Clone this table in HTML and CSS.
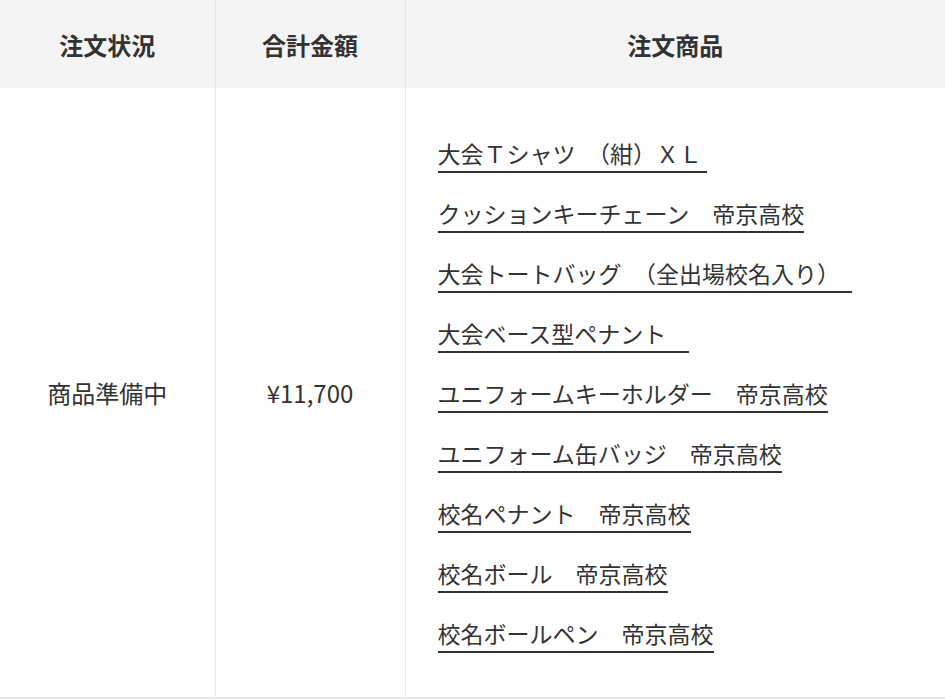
FILE: index.html
```html
<!DOCTYPE html>
<html lang="ja">
<head>
<meta charset="utf-8">
<link rel="stylesheet" href="styles.css">
</head>
<body>
<table class="orders">
  <colgroup>
    <col class="col-status">
    <col class="col-total">
    <col class="col-items">
  </colgroup>
  <thead>
    <tr>
      <th>注文状況</th>
      <th>合計金額</th>
      <th>注文商品</th>
    </tr>
  </thead>
  <tbody>
    <tr>
      <td class="center">商品準備中</td>
      <td class="center">¥11,700</td>
      <td class="items">
        <ul class="item-list">
          <li><a class="item">大会Ｔシャツ　（紺）ＸＬ&nbsp;</a></li>
          <li><a class="item">クッションキーチェーン　帝京高校</a></li>
          <li><a class="item">大会トートバッグ　（全出場校名入り）　</a></li>
          <li><a class="item">大会ベース型ペナント　</a></li>
          <li><a class="item">ユニフォームキーホルダー　帝京高校</a></li>
          <li><a class="item">ユニフォーム缶バッジ　帝京高校</a></li>
          <li><a class="item">校名ペナント　帝京高校</a></li>
          <li><a class="item">校名ボール　帝京高校</a></li>
          <li><a class="item">校名ボールペン　帝京高校</a></li>
        </ul>
      </td>
    </tr>
  </tbody>
</table>
</body>
</html>
```
FILE: styles.css
```css
html, body {
  margin: 0;
  padding: 0;
  background: #fff;
}
body {
  font-family: "Noto Sans CJK JP", "Noto Sans", sans-serif;
  color: #333;
}
.orders {
  width: 945px;
  border-collapse: collapse;
  table-layout: fixed;
}
.col-status { width: 215px; }
.col-total { width: 190px; }
.col-items { width: 540px; }
.orders th {
  height: 88px;
  padding: 0;
  background: #f4f4f4;
  font-size: 24px;
  font-weight: 700;
  text-align: center;
  vertical-align: middle;
  border-left: 1px solid #e8e8e8;
}
.orders th:first-child,
.orders td:first-child {
  border-left: none;
}
.orders td {
  padding: 0;
  font-size: 24px;
  border-left: 1px solid #e8e8e8;
  border-bottom: 2px solid #e8e8e8;
}
.center {
  text-align: center;
  vertical-align: middle;
}
.items {
  vertical-align: top;
}
.item-list {
  list-style: none;
  margin: 0;
  padding: 48px 32px 44px;
  display: flex;
  flex-direction: column;
  align-items: flex-start;
  gap: 23.5px;
  font-size: 23px;
}
.item {
  display: inline-block;
  line-height: 34.5px;
  border-bottom: 2px solid #333;
  color: #333;
  white-space: nowrap;
}
```
